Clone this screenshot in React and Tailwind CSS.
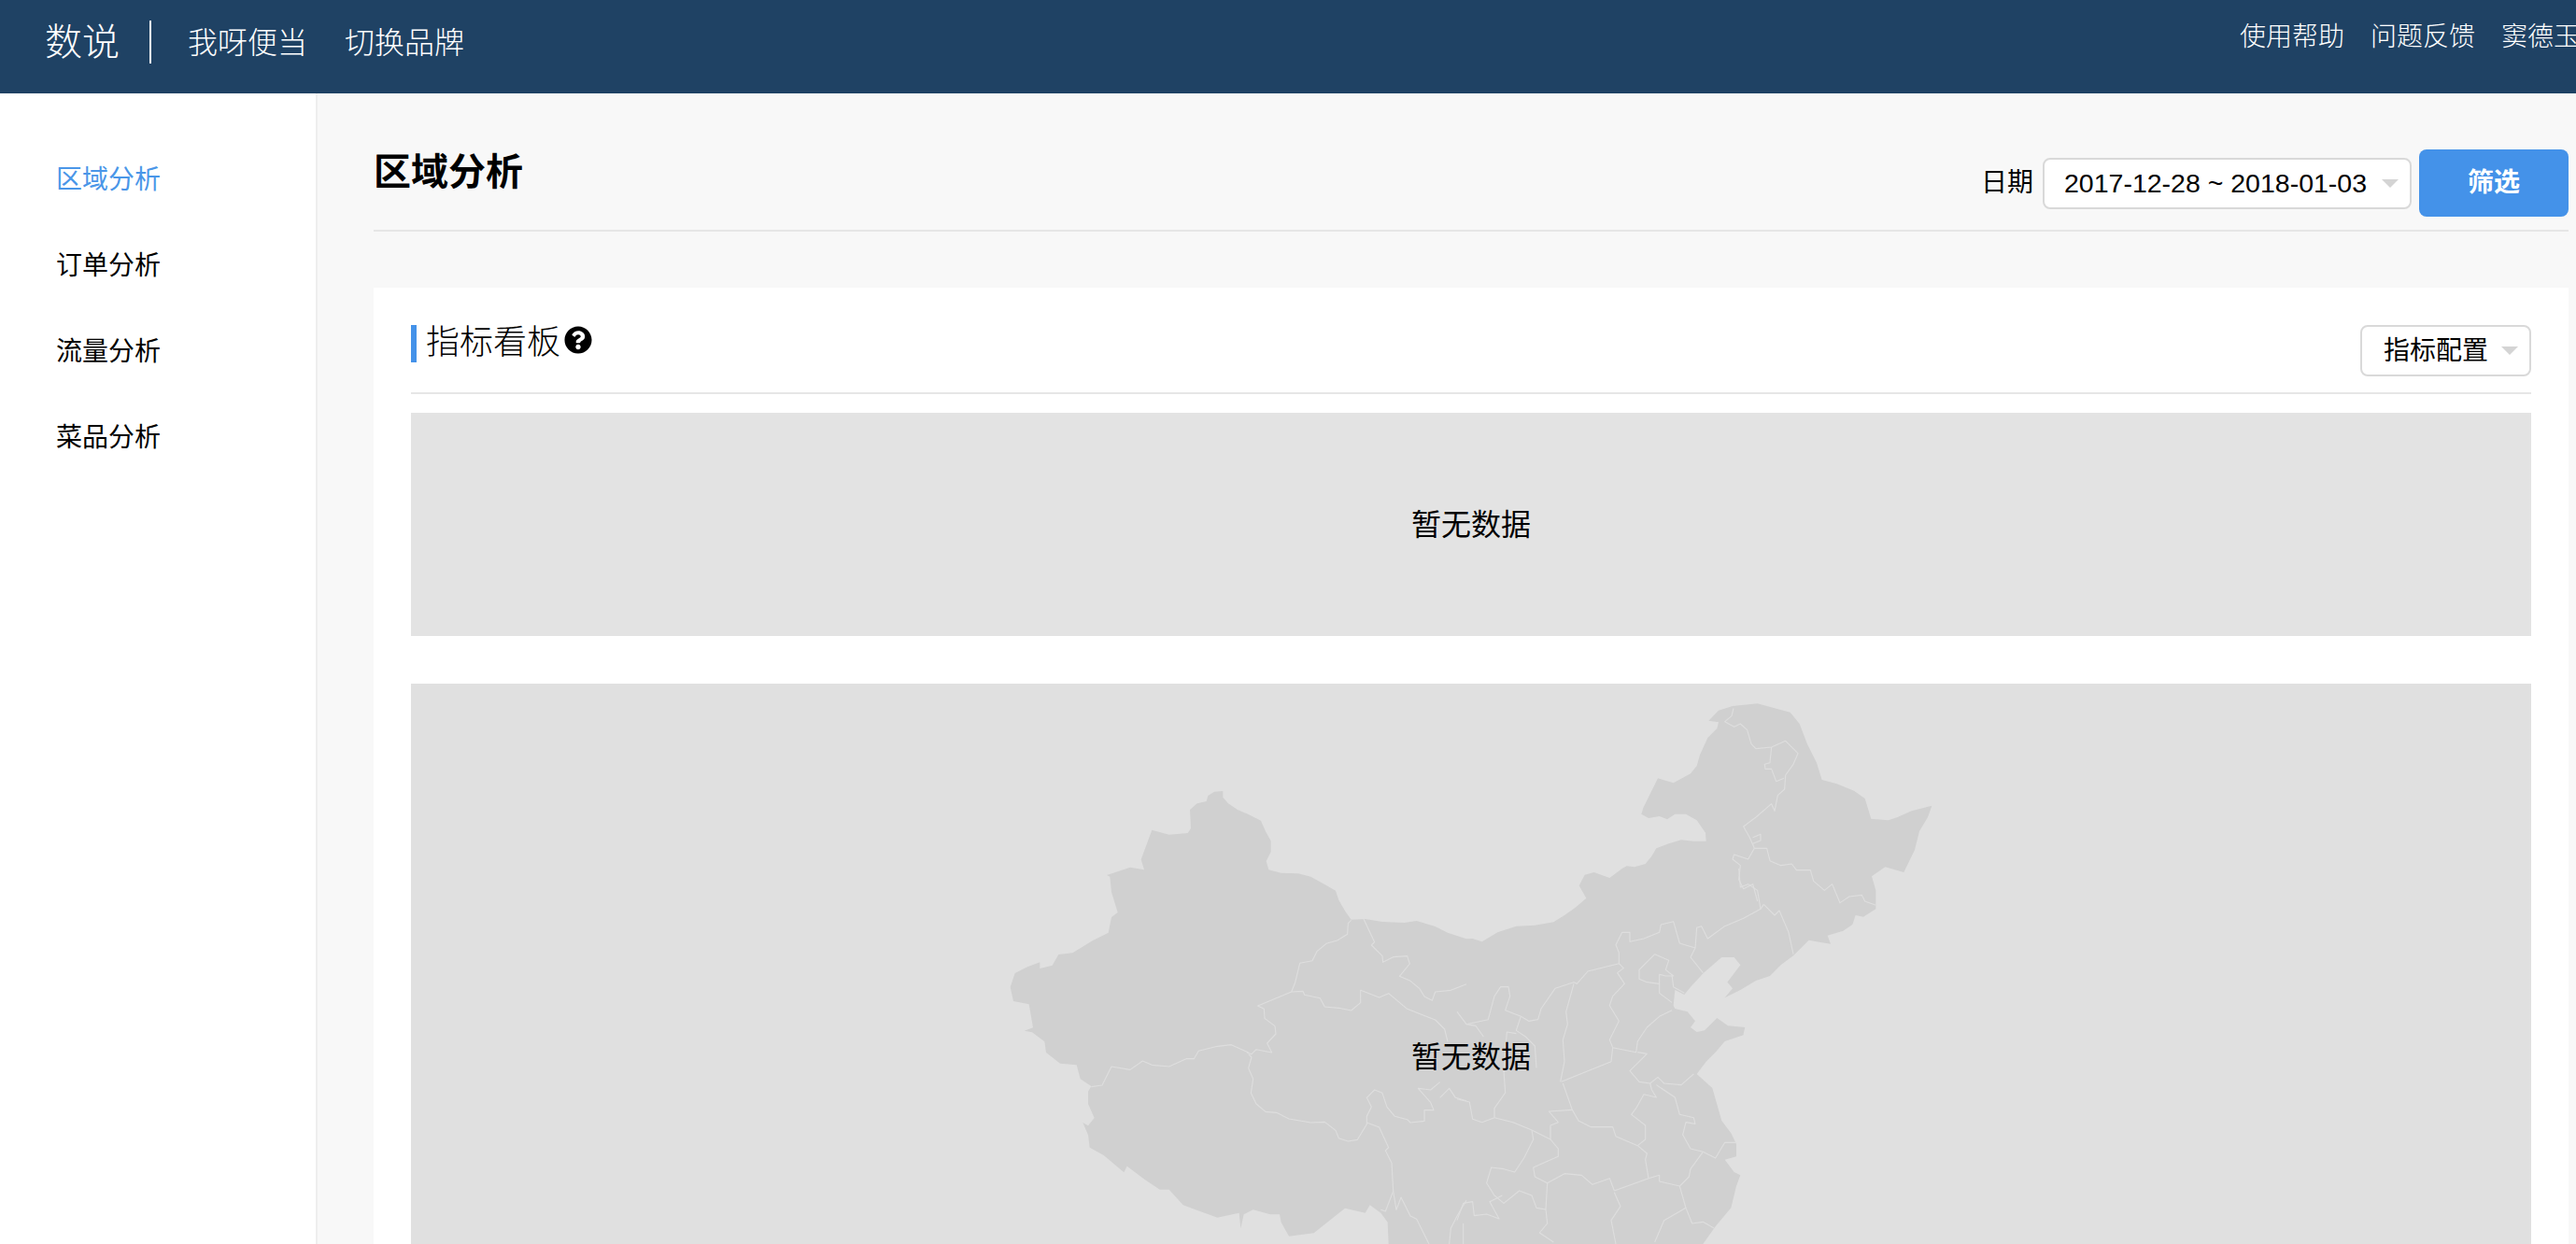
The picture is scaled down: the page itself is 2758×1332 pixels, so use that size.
import React from 'react';
import { FaQuestionCircle } from 'react-icons/fa';

const sideItems = ['区域分析', '订单分析', '流量分析', '菜品分析'];

// map points were traced from three crops, so each list is shifted back to page space
const west = (s) => toPage(1070, 832, s);
const mid = (s) => toPage(1560, 930, s);
const north = (s) => toPage(1700, 740, s);

function toPage(ox, oy, s) {
  return s
    .trim()
    .split(/\s+/)
    .map((p) => {
      const [x, y] = p.split(',');
      return ox + x / 3 + ',' + (oy + y / 3);
    })
    .join(' ');
}

const chinaOutline =
  'M' +
  [
    west('670,60 690,47 718,45 718,65 735,85 765,105 800,120 840,140 855,175 872,205 872,240 857,270 865,298 905,308 960,310 1000,320 1045,345 1080,365 1090,395 1110,430 1130,458 1175,456 1230,465 1300,468 1340,462 1400,480 1440,500 1500,520'),
    mid('50,225 80,235 130,205 190,185 250,182 310,172 345,150 380,125 415,95 392,55 410,20 440,12 490,30 530,0'),
    north('125,562 150,565 185,555 205,530 220,505 260,490 300,478 340,482 380,482 378,455 350,415 315,395 280,395 255,412 230,402 195,408 172,395 178,375 225,280 275,295 330,265 350,240 360,205 385,150 415,120 420,100 388,95 420,62 465,48 545,40 600,55 650,68 680,105 705,170 735,230 752,285 800,298 855,320 890,345 910,410 965,415 995,405 1040,385 1105,368 1092,405 1065,450 1050,510 1015,582 955,565 912,595 925,640 925,700 885,725 860,720 850,750 820,770 770,785 780,812 735,805 710,800 660,850 620,880 585,915 540,930 490,960 440,985 465,955 448,935 490,880 470,855 430,855 372,905 335,945 310,975 280,960 275,1010 280,1020 320,1030 345,1060 330,1080 350,1095 375,1090 415,1050 450,1075 505,1080 500,1100'),
    mid('920,535 860,555 830,590 800,620 770,660 820,705 850,810 880,850 897,885 897,925 860,935 890,975 910,985 897,1020 880,1090 830,1150 790,1206'),
    west('1250,1500 1247,1430 1225,1400 1190,1375 1175,1400 1110,1385 1060,1425 1010,1465 930,1475 905,1430 900,1405 870,1405 815,1390 785,1405 775,1450 770,1400 700,1415 630,1390 590,1375 545,1325 515,1325 470,1295 410,1250 400,1270 335,1215 290,1190 285,1150 268,1110 285,1120 305,1095 285,1050 285,1010 295,993 260,970 248,925 195,920 150,885 145,850 105,820 80,815 108,805 95,730 45,720 35,675 50,630 90,610 130,595 130,615 170,605 190,570 235,565 300,525 350,500 360,450 380,435 360,370 355,320 345,315 420,290 465,298 455,265 490,170 545,185 605,180 615,165 612,105 635,85 665,78'),
  ].join(' ') +
  'Z';

const chinaBorders = [
  west('1130,460 1120,470 1118,505 1085,525 1050,535 1020,560 1005,590 965,598 950,660 938,690 830,735 850,745 852,775 885,800 888,825 860,855 875,885 825,875 810,890 795,885'),
  west('800,885 745,860 700,865 640,880 625,905 600,905 545,930 490,925 460,912 420,940 360,930 345,960 330,990 295,995'),
  west('800,890 810,900 800,935 815,970 808,1015 825,1050 855,1075 890,1078 930,1098 1000,1110 1045,1108 1080,1135 1090,1160 1120,1170 1150,1165 1180,1115 1180,1090 1195,1060 1180,1030 1205,1005 1230,1015 1245,1060 1270,1090 1310,1100 1320,1110 1365,1105 1365,1070 1395,1070 1385,1045 1345,1000 1385,1005 1415,980'),
  west('938,690 975,688 980,700 1030,710 1045,738 1090,742 1130,750 1160,725 1160,685 1220,708 1250,695 1310,745 1400,780 1430,810 1440,850'),
  west('1170,456 1205,530 1195,540 1230,575 1232,595 1265,578 1310,575 1318,600 1285,640 1320,655 1350,680 1365,705 1390,718 1400,690 1450,685 1500,665'),
  west('1180,1110 1220,1125 1250,1190 1240,1200 1260,1240 1265,1330 1240,1395 1225,1390'),
  west('1265,1330 1275,1390 1290,1350 1320,1410 1340,1420 1380,1500'),
  west('1500,1360 1470,1410 1450,1450 1445,1500'),
  west('1415,1030 1445,1000 1465,1030 1500,1040'),
  mid('30,500 100,485 120,410 140,380 165,380 170,410 155,455 205,475 230,490 260,485 270,450 315,385 375,365 385,370 420,330 520,305 520,270 510,245 530,205 555,205 555,235 600,225 650,205 655,180 695,170 715,240 765,255 770,190 785,185 805,225 860,185 920,160 975,130 985,115'),
  mid('0,460 30,500 60,505 85,540'),
  mid('765,255 750,285 790,335'),
  mid('985,115 1020,150 1035,135 1065,205 1080,275'),
  mid('975,130 965,70 935,50 910,60 905,0'),
  mid('375,370 350,460 355,500 340,550 345,620 332,685'),
  mid('520,305 535,320 515,335 538,370 500,410 490,440 520,490 490,550 500,575'),
  mid('500,575 495,620 420,650 335,685'),
  mid('500,575 575,590 580,555 610,510 650,475 690,455'),
  mid('580,590 610,595 555,650 585,685 620,690 625,710 640,735 600,725 575,770 560,790 605,825 605,870 580,890'),
  mid('340,690 370,775 390,810 430,830 500,830 510,860 580,890'),
  mid('620,690 645,670 665,690 720,695 760,660'),
  mid('640,695 700,735 715,790 760,800 765,820 735,815 725,855 750,900 790,910 830,930 860,880 895,880'),
  mid('580,890 610,915 605,935 615,995'),
  mid('790,910 750,965 745,990 715,1020'),
  mid('615,995 650,985 650,1005 715,1020'),
  mid('245,960 250,990 290,1010 345,980 400,985 435,1015 490,995 505,1035'),
  mid('505,1040 525,1085 495,1130 510,1206'),
  mid('505,1035 615,995'),
  mid('715,1020 735,1090 755,1140 790,1135 825,1155'),
  mid('735,1090 665,1130 635,1200'),
  mid('370,775 295,780 325,815 300,825 300,870 325,900 325,925 245,960'),
  mid('120,800 180,815 240,840 300,870'),
  mid('240,840 245,870 215,930 185,975 150,965 110,960 95,1010 120,1050 150,1075 200,1035 240,1050 255,1090 285,1095'),
  mid('290,1010 285,1095 290,1140 265,1170 310,1200'),
  mid('205,475 190,520 220,540 250,570 255,640'),
  mid('190,530 160,525 150,650 155,720 120,770 120,800'),
  mid('0,740 40,750 50,805 80,815 120,800'),
  mid('0,1130 20,1075 50,1070 55,1115 95,1110 135,1125 105,1070 145,1050'),
  mid('20,1140 20,1206'),
  mid('635,275 680,295 670,325 695,345 670,345 650,340 650,370 610,365 585,355 585,325 635,275'),
  mid('650,370 650,400 690,430'),
  mid('690,340 695,380 730,400'),
  north('468,55 462,80 440,98 470,115 490,105 512,125 525,170 540,185 590,180 635,160 675,200 660,235 635,270 632,315 610,335 600,385 590,362 540,405 500,435 520,470 535,505'),
  north('590,180 585,230 568,235 570,250 590,250 605,290 630,280'),
  north('535,505 575,505 585,545 620,560 655,555 670,575 715,575 725,610 760,640 785,620 810,680 840,660 880,655 890,675 925,688'),
  north('535,505 515,540 470,525 465,540 490,560 485,605 500,635 530,620 545,675'),
  north('530,470 555,460 555,480 530,490'),
];

function Caret() {
  return <span className="w-0 h-0 border-x-[9px] border-t-[9px] border-x-transparent border-t-[#d4d4d4]"></span>;
}

export default function App() {
  return (
    <div className="h-screen overflow-hidden flex flex-col bg-[#f8f8f8] text-black font-['Liberation_Sans','Noto_Sans_CJK_SC',sans-serif]">
      {/* Top bar */}
      <header className="h-[100px] shrink-0 bg-[#1f4264] text-white flex items-start overflow-hidden">
        <div className="flex items-center h-[90px] pl-[48px]">
          <span className="text-[40px] font-light leading-none">数说</span>
          <span className="w-[2px] h-[46px] bg-white ml-[32px] mr-[39px]"></span>
          <span className="text-[32px] font-light leading-none mt-[1px]">我呀便当</span>
          <span className="text-[32px] font-light leading-none mt-[1px] ml-[40px]">切换品牌</span>
        </div>
        <div className="ml-auto flex gap-[28px] pt-[26px] text-[28px] font-light leading-none whitespace-nowrap w-[360px] shrink-0">
          <span>使用帮助</span>
          <span>问题反馈</span>
          <span>窦德玉</span>
        </div>
      </header>

      <div className="flex flex-1 min-h-0">
        {/* Sidebar */}
        <aside className="w-[340px] shrink-0 bg-white border-r-2 border-[#eeeeee] pt-[69px] pl-[60px]">
          {sideItems.map((item, i) => (
            <div key={item} className={'h-[92px] text-[28px] leading-[48px] ' + (i === 0 ? 'text-[#4a96e8]' : 'text-black')}>
              {item}
            </div>
          ))}
        </aside>

        {/* Main */}
        <main className="flex-1 min-w-0 pl-[60px] pr-[8px]">
          <div className="h-[148px] flex items-start border-b-2 border-[#e6e6e6]">
            <h1 className="text-[40px] font-bold leading-none mt-[64px]">区域分析</h1>
            <div className="ml-auto flex items-center mt-[60px] h-[72px]">
              <span className="text-[28px] mr-[10px] leading-none">日期</span>
              <div className="w-[395px] h-[55px] rounded-[8px] border-2 border-[#d9d9d9] bg-white flex items-center pl-[21px] pr-[12px] justify-between">
                <span className="text-[28.5px] leading-none whitespace-nowrap">2017-12-28 ~ 2018-01-03</span>
                <Caret />
              </div>
              <button className="w-[160px] h-[72px] ml-[8px] rounded-[8px] bg-[#4492e9] text-white text-[28px] font-bold">筛选</button>
            </div>
          </div>

          <section className="mt-[60px] bg-white px-[40px] pt-[40px]">
            <div className="h-[74px] flex items-start border-b-2 border-[#e6e6e6]">
              <div className="flex items-center h-[40px] border-l-[6px] border-[#4492e9] pl-[10px]">
                <span className="text-[36px] font-light leading-none -mt-[2px]">指标看板</span>
                <FaQuestionCircle className="w-[30px] h-[30px] ml-[4px] -mt-[8px]" />
              </div>
              <div className="ml-auto w-[183px] h-[55px] rounded-[8px] border-2 border-[#d9d9d9] flex items-center pl-[23px] pr-[12px] justify-between">
                <span className="text-[28px] leading-none whitespace-nowrap">指标配置</span>
                <Caret />
              </div>
            </div>

            <div className="mt-[20px] h-[239px] bg-[#e3e3e3] flex items-center justify-center text-[32px]">暂无数据</div>

            <div className="relative mt-[51px] h-[800px] bg-[#e0e0e0]">
              <svg className="block ml-[600px] w-[1060px] h-[600px]" viewBox="1040 732 1060 600">
                <path d={chinaOutline} fill="#d0d0d0" strokeLinejoin="round" />
                {chinaBorders.map((pts) => (
                  <polyline key={pts} points={pts} fill="none" stroke="#dedede" strokeWidth="1.1" strokeLinejoin="round" />
                ))}
              </svg>
              <div className="absolute inset-0 flex items-center justify-center text-[32px]">暂无数据</div>
            </div>
          </section>
        </main>
      </div>
    </div>
  );
}
